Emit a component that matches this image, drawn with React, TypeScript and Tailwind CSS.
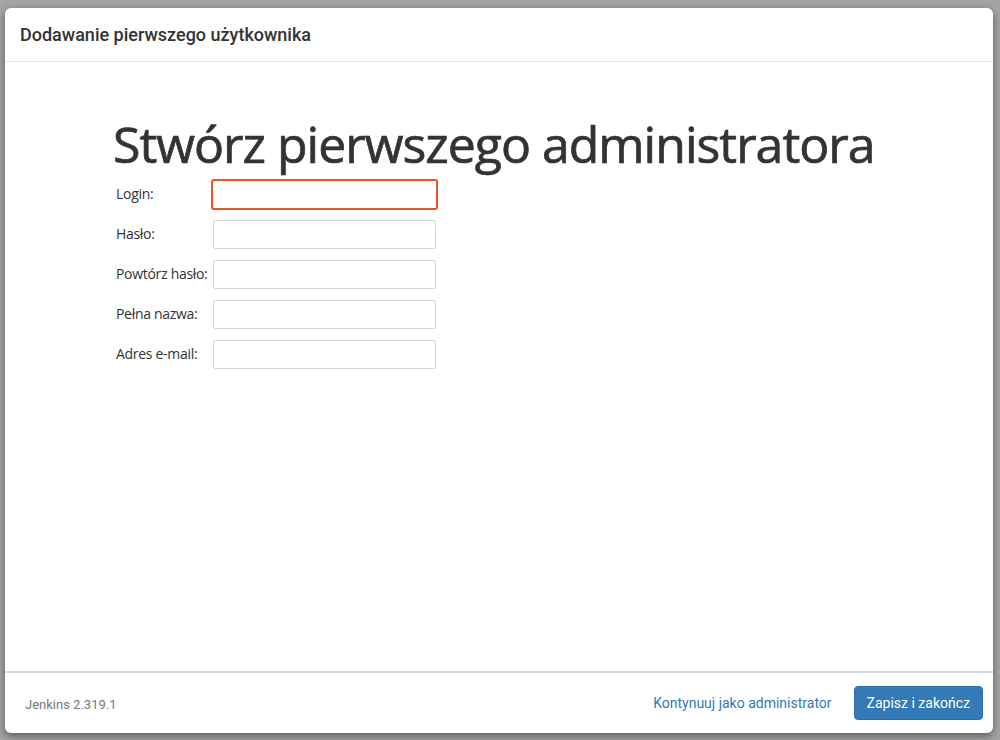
import * as React from "react";

type Field = {
  id: string;
  label: string;
  type: string;
};

const fields: Field[] = [
  { id: "username", label: "Login:", type: "text" },
  { id: "password1", label: "Hasło:", type: "password" },
  { id: "password2", label: "Powtórz hasło:", type: "password" },
  { id: "fullname", label: "Pełna nazwa:", type: "text" },
  { id: "email", label: "Adres e-mail:", type: "text" },
];

export default function App() {
  return (
    <div className="h-[740px] w-[1000px] overflow-hidden bg-[#a4a4a4] pb-[7px] pl-[5px] pr-[7px] pt-[8px]">
      <div className="flex h-full flex-col rounded-[6px] bg-white shadow-[0_3px_9px_rgba(0,0,0,0.45)]">
        <div className="flex h-[54px] shrink-0 items-center border-b border-[#e5e5e5] px-[15px]">
          <h4 className="font-['Roboto',sans-serif] text-[18px] font-medium text-[#333]">
            Dodawanie pierwszego użytkownika
          </h4>
        </div>

        <div className="flex-1 pl-[108px] pt-[52px] font-['Open_Sans',sans-serif] text-[#333]">
          <h1 className="text-[50px] leading-[60px] tracking-[-1px] text-[#333] [-webkit-text-stroke:0.7px_#333]">
            Stwórz pierwszego administratora
          </h1>
          <div className="mt-[6px] flex flex-col gap-[11px] pl-[3px]">
            {fields.map((f, i) => (
              <div key={f.id} className="flex h-[29px] items-center">
                <label
                  htmlFor={f.id}
                  className="-mt-[2px] w-[97px] text-[14px] tracking-[-0.3px] text-[#333]"
                >
                  {f.label}
                </label>
                <input
                  id={f.id}
                  type={f.type}
                  className={
                    i === 0
                      ? "h-[31px] w-[227px] -ml-[2px] rounded-[3px] border-2 border-[#e4572e] bg-white outline-none"
                      : "h-[29px] w-[223px] rounded-[2px] border border-[#d6d6d6] bg-white outline-none"
                  }
                />
              </div>
            ))}
          </div>
        </div>

        <div className="flex h-[62px] shrink-0 items-center justify-between border-t-2 border-[#d9d9d9] pl-[20px] pr-[10px] font-['Roboto',sans-serif]">
          <span className="mt-[3px] text-[13px] text-[#777]">Jenkins 2.319.1</span>
          <div className="flex items-center gap-[22px]">
            <a className="cursor-pointer text-[14px] text-[#337ab7]">
              Kontynuuj jako administrator
            </a>
            <button
              type="button"
              className="h-[34px] rounded-[4px] border border-[#2e6da4] bg-[#337ab7] px-[12px] text-[14px] text-white"
            >
              Zapisz i zakończ
            </button>
          </div>
        </div>
      </div>
    </div>
  );
}
